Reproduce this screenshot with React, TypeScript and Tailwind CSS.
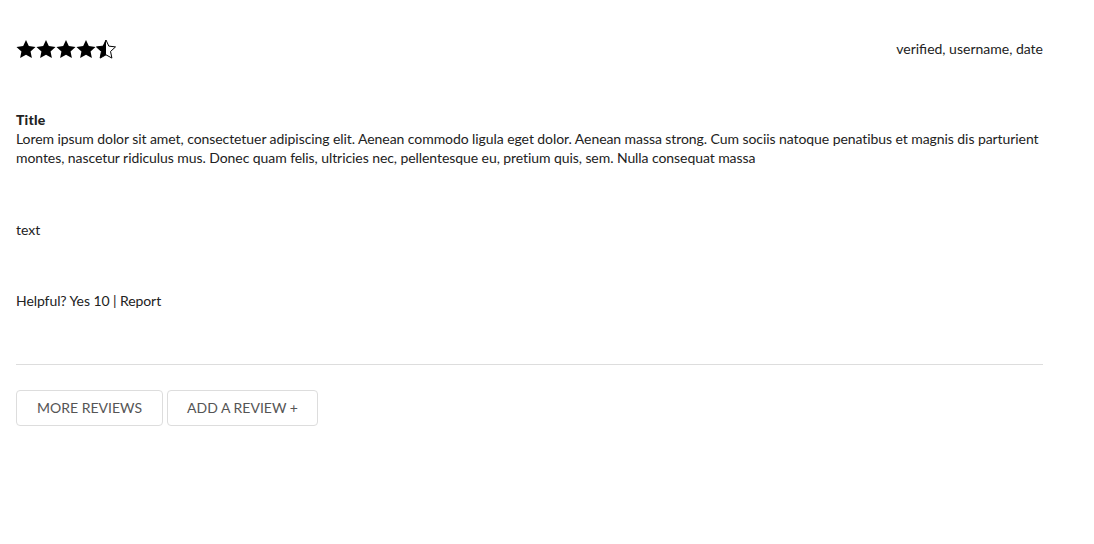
const STAR =
  "10,0 12.82,6.12 19.51,6.91 14.56,11.48 15.88,18.09 10,14.8 4.12,18.09 5.44,11.48 0.49,6.91 7.18,6.12";

function Star({ half }: { half?: boolean }) {
  return (
    <svg width="20" height="19" viewBox="0 0 20 19">
      {half && (
        <defs>
          <linearGradient id="halfstar">
            <stop offset="50%" stopColor="#000" />
            <stop offset="50%" stopColor="#fff" />
          </linearGradient>
        </defs>
      )}
      <polygon
        points={STAR}
        fill={half ? "url(#halfstar)" : "#000"}
        stroke="#000"
        strokeWidth={half ? 1 : 0}
        strokeLinejoin="miter"
      />
    </svg>
  );
}

function Stars({ rating }: { rating: number }) {
  const stars = [];
  for (let i = 1; i <= 5; i++) {
    stars.push(<Star key={i} half={rating < i} />);
  }
  return <div className="flex items-center">{stars}</div>;
}

export default function App() {
  return (
    <div
      className="bg-white text-[#222] text-[14px] leading-[19px] min-h-screen"
      style={{ fontFamily: "Lato, 'Open Sans', sans-serif" }}
    >
      <div className="w-[1027px] ml-4 pt-[39px]">
        <div className="flex items-center justify-between h-5">
          <Stars rating={4.5} />
          <span className="pb-[2px]">verified, username, date</span>
        </div>

        <div className="mt-[51px]">
          <div className="font-black tracking-[0.2px]">Title</div>
          <p className="tracking-[-0.07px]">
            Lorem ipsum dolor sit amet, consectetuer adipiscing elit. Aenean commodo ligula eget dolor. Aenean massa strong. Cum sociis natoque penatibus et magnis dis parturient montes, nascetur ridiculus mus. Donec quam felis, ultricies nec, pellentesque eu, pretium quis, sem. Nulla consequat massa
          </p>
        </div>

        <p className="mt-[53px]">text</p>

        <p className="mt-[52px] tracking-[-0.08px]">Helpful? Yes 10 | Report</p>

        <hr className="mt-[54px] border-[#ddd]" />

        <div className="flex gap-1 mt-[25px]">
          <button className="h-9 w-[147px] pb-[2px] border border-[#ddd] rounded-sm text-[#555] uppercase">
            More reviews
          </button>
          <button className="h-9 w-[151px] pb-[2px] border border-[#ddd] rounded-sm text-[#555] uppercase">
            Add a review +
          </button>
        </div>
      </div>
    </div>
  );
}
